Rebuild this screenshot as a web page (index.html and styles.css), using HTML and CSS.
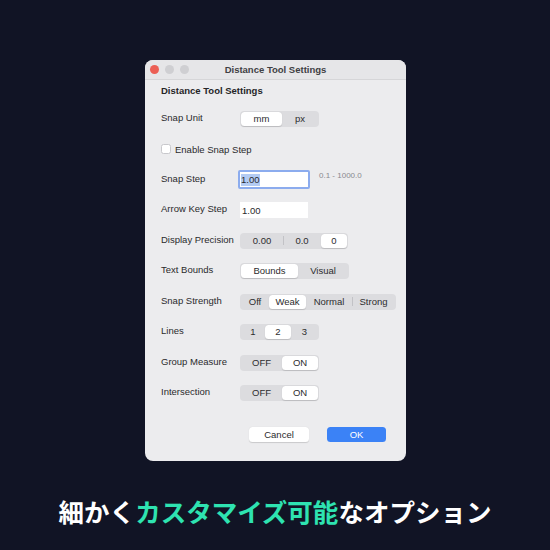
FILE: index.html
```html
<!DOCTYPE html>
<html>
<head>
<meta charset="utf-8">
<link rel="stylesheet" href="styles.css">
</head>
<body>
<div class="stage">
  <div class="window">
    <div class="titlebar">
      <div class="lights"><span class="light red"></span><span class="light"></span><span class="light"></span></div>
      <div class="title">Distance Tool Settings</div>
    </div>
    <div class="content">
      <div class="heading">Distance Tool Settings</div>
      <div class="rows">
        <div class="row">
          <div class="label">Snap Unit</div>
          <div class="seg">
            <span class="opt sel w41">mm</span><span class="opt w36">px</span>
          </div>
        </div>
        <div class="row">
          <label class="check"><span class="box"></span>Enable Snap Step</label>
        </div>
        <div class="row">
          <div class="label">Snap Step</div>
          <div class="input focus"><span class="selected-text">1.00</span></div>
          <div class="hint">0.1 - 1000.0</div>
        </div>
        <div class="row">
          <div class="label">Arrow Key Step</div>
          <div class="input plain">1.00</div>
        </div>
        <div class="row">
          <div class="label">Display Precision</div>
          <div class="seg">
            <span class="opt w42">0.00</span><span class="sep"></span><span class="opt w38">0.0</span><span class="opt sel w26">0</span>
          </div>
        </div>
        <div class="row">
          <div class="label">Text Bounds</div>
          <div class="seg">
            <span class="opt sel w57">Bounds</span><span class="opt w50">Visual</span>
          </div>
        </div>
        <div class="row">
          <div class="label">Snap Strength</div>
          <div class="seg">
            <span class="opt w28">Off</span><span class="opt sel w37">Weak</span><span class="opt w46">Normal</span><span class="sep"></span><span class="opt w43">Strong</span>
          </div>
        </div>
        <div class="row">
          <div class="label">Lines</div>
          <div class="seg">
            <span class="opt w24">1</span><span class="opt sel w26">2</span><span class="opt w27">3</span>
          </div>
        </div>
        <div class="row">
          <div class="label">Group Measure</div>
          <div class="seg">
            <span class="opt w41">OFF</span><span class="opt sel w36">ON</span>
          </div>
        </div>
        <div class="row">
          <div class="label">Intersection</div>
          <div class="seg">
            <span class="opt w41">OFF</span><span class="opt sel w36">ON</span>
          </div>
        </div>
      </div>
      <div class="buttons">
        <div class="btn cancel">Cancel</div>
        <div class="btn ok">OK</div>
      </div>
    </div>
  </div>
  <div class="caption">細かく<span class="accent">カスタマイズ可能</span>なオプション</div>
</div>
</body>
</html>
```

FILE: styles.css
```css
* { box-sizing: border-box; }
html, body {
  margin: 0;
  padding: 0;
  width: 550px;
  height: 550px;
  background: #111425;
  overflow: hidden;
}
.stage {
  display: flex;
  flex-direction: column;
  align-items: flex-start;
  padding-top: 60px;
}
.window {
  margin-left: 145px;
  width: 261px;
  height: 401px;
  background: #ececee;
  border-radius: 8px;
  overflow: hidden;
  font-family: "Liberation Sans", Arial, sans-serif;
  color: #2a2a2c;
  font-size: 9.5px;
  display: flex;
  flex-direction: column;
}
.titlebar {
  height: 20px;
  flex: none;
  display: flex;
  align-items: center;
  position: relative;
  background: #e6e6e8;
  border-bottom: 1px solid #d6d6d8;
}
.lights {
  display: flex;
  gap: 6px;
  padding-left: 5px;
}
.light {
  width: 9px;
  height: 9px;
  border-radius: 50%;
  background: #cfcfd2;
}
.light.red { background: #ec5f55; }
.title {
  position: absolute;
  left: 0;
  right: 0;
  top: 0;
  line-height: 19px;
  text-align: center;
  font-weight: bold;
  font-size: 9.5px;
  color: #404043;
}
.content {
  padding: 4px 20px 0 16px;
  display: flex;
  flex-direction: column;
}
.heading {
  height: 14px;
  line-height: 14px;
  font-weight: bold;
  font-size: 9.5px;
  color: #252527;
}
.rows {
  margin-top: 5.25px;
  display: flex;
  flex-direction: column;
}
.row {
  height: 30.5px;
  display: flex;
  align-items: center;
}
.label {
  width: 79px;
  flex: none;
  margin-top: -3px;
}
.seg {
  display: flex;
  align-items: center;
  height: 16px;
  padding: 1px;
  background: #dcdcdf;
  border-radius: 4px;
}
.opt {
  height: 14px;
  line-height: 14px;
  text-align: center;
  border-radius: 3.5px;
  color: #2c2c2e;
}
.opt.sel {
  background: #ffffff;
  box-shadow: 0 0.5px 1px rgba(0,0,0,0.15);
}
.sep {
  width: 1px;
  height: 9px;
  background: #c2c2c6;
  margin: 0 -0.5px;
}
.w24 { width: 24px; }
.w26 { width: 26px; }
.w27 { width: 27px; }
.w28 { width: 28px; }
.w36 { width: 36px; }
.w37 { width: 37px; }
.w38 { width: 38px; }
.w41 { width: 41px; }
.w42 { width: 42px; }
.w43 { width: 43px; }
.w46 { width: 46px; }
.w50 { width: 50px; }
.w57 { width: 57px; }
.check {
  display: flex;
  align-items: center;
  gap: 4px;
}
.box {
  width: 10px;
  height: 10px;
  background: #fff;
  border: 0.5px solid #c8c8cc;
  border-radius: 2.5px;
}
.input {
  background: #fff;
  display: flex;
  align-items: center;
}
.input.focus {
  margin-left: -2px;
  width: 72px;
  height: 19px;
  border: 2px solid #8cacee;
  border-radius: 2px;
  padding-left: 1px;
}
.selected-text {
  background: #b3cbf3;
  line-height: 12px;
}
.input.plain {
  width: 68px;
  height: 16px;
  padding-left: 2px;
}
.hint {
  margin-left: 9px;
  margin-top: -8px;
  font-size: 8px;
  color: #8a8a8e;
}
.buttons {
  margin-top: 19px;
  display: flex;
  justify-content: flex-end;
  gap: 18px;
  padding-left: 88px;
}
.btn {
  height: 15px;
  line-height: 15px;
  text-align: center;
  border-radius: 3.5px;
  font-size: 9.5px;
}
.cancel {
  width: 60px;
  background: #fff;
  color: #2a2a2c;
  box-shadow: 0 0.5px 1px rgba(0,0,0,0.15);
}
.ok {
  width: 59px;
  background: #3b82f6;
  color: #fff;
}
.caption {
  align-self: center;
  margin-top: 35px;
  font-family: "Noto Sans CJK JP", "Noto Sans", sans-serif;
  font-weight: bold;
  font-size: 25.5px;
  line-height: 30px;
  color: #ffffff;
  white-space: nowrap;
}
.accent { color: #2ee3b1; }
```
